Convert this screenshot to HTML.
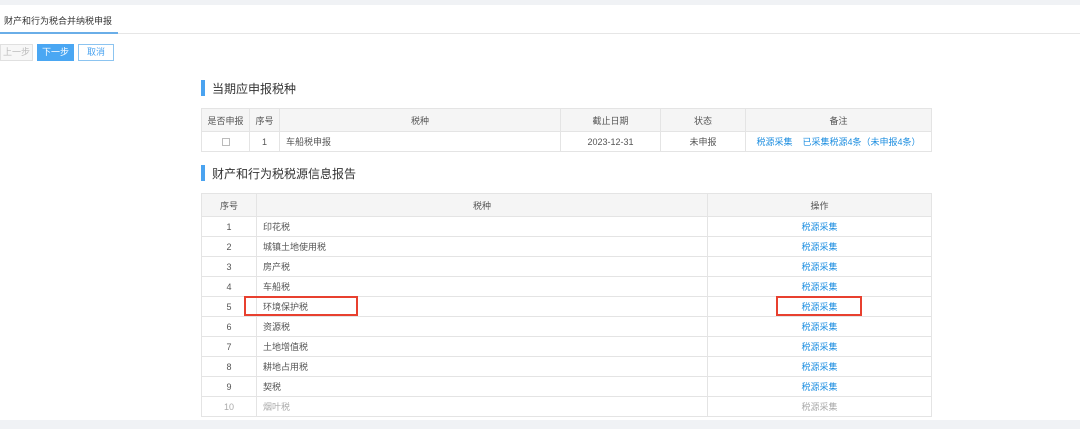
<!DOCTYPE html>
<html><head><meta charset="utf-8"><style>
*{margin:0;padding:0;box-sizing:border-box}
body{width:1080px;height:429px;background:#fff;font-family:"Liberation Sans","Noto Sans CJK SC",sans-serif;font-size:9px;color:#555;position:relative;overflow:hidden}
.a{position:absolute}
table{position:absolute;border-collapse:collapse;table-layout:fixed}
td{border:1px solid #e4e4e4;height:20px;font-size:9px;color:#555;text-align:center;padding:0;vertical-align:middle}
tr.h td{background:#f5f5f5;height:23px}
td.l{text-align:left;padding-left:6px}
.lk{color:#1d8ee0}
.g{color:#aaa}
.bar{position:absolute;width:4px;height:16px;background:#4aa3f0}
.st{position:absolute;font-size:12px;color:#333}
.btn{position:absolute;top:44px;height:17px;font-size:9px;text-align:center;line-height:15px;border:1px solid}
</style></head><body>
<div class="a" style="left:0;top:0;width:1080px;height:5px;background:#f0f2f5"></div>
<div class="a" style="left:4px;top:14px;font-size:9px;color:#333">财产和行为税合并纳税申报</div>
<div class="a" style="left:0;top:33px;width:1080px;height:1px;background:#e6e6e6"></div>
<div class="a" style="left:0;top:32px;width:118px;height:2px;background:#6aaee8"></div>
<div class="btn" style="left:0;width:33px;border-color:#e0e0e0;color:#bbb;background:#f7f7f7">上一步</div>
<div class="btn" style="left:37px;width:37px;border-color:#4aa7f3;color:#fff;background:#4aa7f3">下一步</div>
<div class="btn" style="left:78px;width:36px;border-color:#8cc4f0;color:#4aa3f0;background:#fff">取消</div>

<div class="bar" style="left:201px;top:80px"></div>
<div class="st" style="left:212px;top:80px">当期应申报税种</div>
<table style="left:201px;top:108px;width:731px">
<colgroup><col style="width:48px"><col style="width:30px"><col style="width:281px"><col style="width:100px"><col style="width:85px"><col></colgroup>
<tr class="h"><td>是否申报</td><td>序号</td><td>税种</td><td>截止日期</td><td>状态</td><td>备注</td></tr>
<tr><td><span style="display:inline-block;width:8px;height:8px;border:1px solid #bbb;vertical-align:middle"></span></td><td>1</td><td class="l">车船税申报</td><td>2023-12-31</td><td>未申报</td><td class="lk">税源采集 &nbsp;&nbsp; 已采集税源4条（未申报4条）</td></tr>
</table>

<div class="bar" style="left:201px;top:165px"></div>
<div class="st" style="left:212px;top:165px">财产和行为税税源信息报告</div>
<table style="left:201px;top:193px;width:731px">
<colgroup><col style="width:55px"><col style="width:451px"><col></colgroup>
<tr class="h"><td>序号</td><td>税种</td><td>操作</td></tr>
<tr><td>1</td><td class="l">印花税</td><td class="lk">税源采集</td></tr>
<tr><td>2</td><td class="l">城镇土地使用税</td><td class="lk">税源采集</td></tr>
<tr><td>3</td><td class="l">房产税</td><td class="lk">税源采集</td></tr>
<tr><td>4</td><td class="l">车船税</td><td class="lk">税源采集</td></tr>
<tr><td>5</td><td class="l">环境保护税</td><td class="lk">税源采集</td></tr>
<tr><td>6</td><td class="l">资源税</td><td class="lk">税源采集</td></tr>
<tr><td>7</td><td class="l">土地增值税</td><td class="lk">税源采集</td></tr>
<tr><td>8</td><td class="l">耕地占用税</td><td class="lk">税源采集</td></tr>
<tr><td>9</td><td class="l">契税</td><td class="lk">税源采集</td></tr>
<tr><td class="g">10</td><td class="l g">烟叶税</td><td class="g">税源采集</td></tr>
</table>
<div class="a" style="left:244px;top:296px;width:114px;height:20px;border:2px solid #e8402f"></div>
<div class="a" style="left:776px;top:296px;width:86px;height:20px;border:2px solid #e8402f"></div>
<div class="a" style="left:0;top:420px;width:1080px;height:9px;background:#f0f2f5"></div>
</body></html>
